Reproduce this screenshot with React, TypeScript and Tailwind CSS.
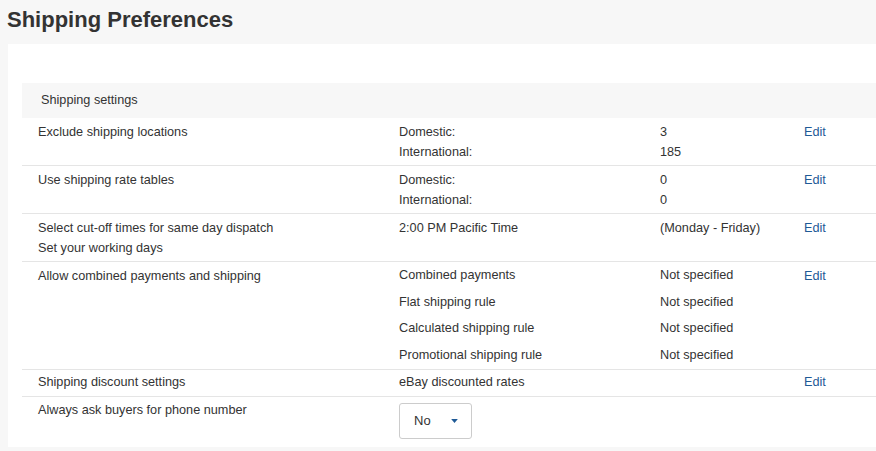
type Sub = { label: string; value?: string };
type Row = {
  title: string[];
  items: Sub[];
  edit?: boolean;
  tall?: boolean;
};

const rows: Row[] = [
  {
    title: ["Exclude shipping locations"],
    items: [
      { label: "Domestic:", value: "3" },
      { label: "International:", value: "185" },
    ],
    edit: true,
  },
  {
    title: ["Use shipping rate tables"],
    items: [
      { label: "Domestic:", value: "0" },
      { label: "International:", value: "0" },
    ],
    edit: true,
  },
  {
    title: ["Select cut-off times for same day dispatch", "Set your working days"],
    items: [{ label: "2:00 PM Pacific Time", value: "(Monday - Friday)" }],
    edit: true,
  },
  {
    title: ["Allow combined payments and shipping"],
    items: [
      { label: "Combined payments", value: "Not specified" },
      { label: "Flat shipping rule", value: "Not specified" },
      { label: "Calculated shipping rule", value: "Not specified" },
      { label: "Promotional shipping rule", value: "Not specified" },
    ],
    edit: true,
    tall: true,
  },
];

export default function App() {
  return (
    <div
      className="min-h-[451px] bg-[#f7f7f7] text-[12.7px] text-[#333]"
      style={{ fontFamily: '"Liberation Sans", Arial, sans-serif' }}
    >
      <h1 className="px-[7px] pt-[6px] h-[44px] text-[22px] font-bold leading-[28px] text-[#333]">
        Shipping Preferences
      </h1>

      <div className="ml-[8px] bg-white pt-[39px] pl-[14px]">
        <div className="h-[35px] bg-[#f7f7f7] pl-[19px] flex items-center">
          Shipping settings
        </div>

        {rows.map((row, i) => (
          <div
            key={i}
            className={`flex border-b border-[#e5e5e5] ${row.tall ? "h-[108px]" : "h-[48px] pt-[4px]"}`}
          >
            <div className={`w-[377px] pl-[16px] leading-[20px] ${row.tall ? "pt-[4px]" : ""}`}>
              {row.title.map((t) => (
                <div key={t}>{t}</div>
              ))}
            </div>
            <div className="w-[405px]">
              {row.items.map((it) => (
                <div
                  key={it.label}
                  className={`flex ${row.tall ? "h-[26.75px] items-center" : "leading-[20px]"}`}
                >
                  <div className="w-[261px]">{it.label}</div>
                  <div>{it.value}</div>
                </div>
              ))}
            </div>
            <div className={`leading-[20px] ${row.tall ? "pt-[4px]" : ""}`}>
              {row.edit && <span className="text-[#1f5a96]">Edit</span>}
            </div>
          </div>
        ))}

        <div className="flex h-[27px] items-center border-b border-[#e5e5e5]">
          <div className="w-[377px] pl-[16px]">Shipping discount settings</div>
          <div className="w-[405px]">eBay discounted rates</div>
          <div className="text-[#1f5a96]">Edit</div>
        </div>

        <div className="flex h-[50px]">
          <div className="w-[377px] pl-[16px] pt-[6px] leading-[14px]">
            Always ask buyers for phone number
          </div>
          <div className="pt-[6px]">
            <div className="flex h-[36px] w-[73px] items-center rounded-[3px] border border-[#ccc] pl-[14px] text-[13px]">
              <span>No</span>
              <svg viewBox="0 0 10 6" className="ml-[20px] h-[4px] w-[7px]" fill="#1f5a96">
                <path d="M0 0h10L5 6z" />
              </svg>
            </div>
          </div>
        </div>
      </div>
    </div>
  );
}
